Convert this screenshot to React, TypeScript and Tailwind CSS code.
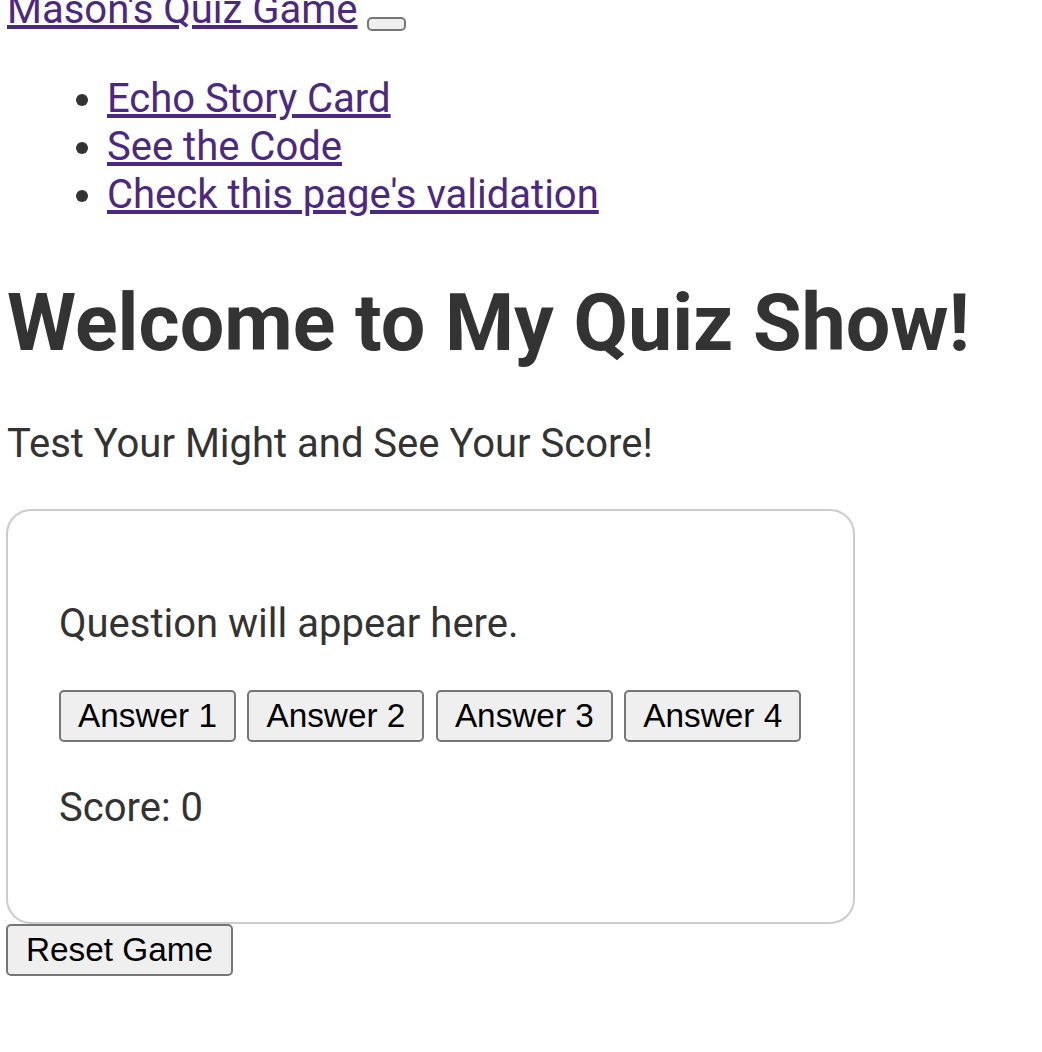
export default function App() {
	const answers = ["Answer 1", "Answer 2", "Answer 3", "Answer 4"];
	const btn =
		"h-[52px] shrink-0 whitespace-nowrap bg-[#efefef] border-2 border-[#767676] rounded-[5px] text-black text-[33.33px] leading-[38px] font-['Liberation_Sans',Arial,sans-serif]";

	return (
		<div className="min-h-[1052px] bg-white overflow-hidden font-['Roboto',sans-serif] text-[#333333] text-[40px] leading-[48px] pl-[6px]">
			{/* header */}
			<div className="flex items-start -mt-[14px] pl-px">
				<a href="#" className="text-[#4b2882] underline">
					Mason's Quiz Game
				</a>
				<button className="ml-[9px] mt-[31px] w-[39px] h-[14px] bg-[#efefef] border-2 border-[#767676] rounded-[5px]"></button>
			</div>

			<ul className="list-disc pl-[101px] mt-[41px]">
				<li><a href="#" className="text-[#4b2882] underline">Echo Story Card</a></li>
				<li><a href="#" className="text-[#4b2882] underline">See the Code</a></li>
				<li><a href="#" className="text-[#4b2882] underline">Check this page's validation</a></li>
			</ul>

			<h1 className="mt-[56px] pl-px text-[79px] leading-[96px] font-bold">Welcome to My Quiz Show!</h1>

			<p className="mt-[49px] pl-px">Test Your Might and See Your Score!</p>

			<div className="mt-[41px] w-[849px] border-2 border-[#cccccc] rounded-[25px] px-[51px] pt-[50px] pb-[50px]">
				<p className="mt-[39px]">Question will appear here.</p>
				<div className="mt-[42px] flex gap-[11.5px]">
					{answers.map((a) => (
						<button key={a} className={`${btn} px-[17px]`}>{a}</button>
					))}
				</div>
				<p className="mt-[42px] mb-[40px]">Score: 0</p>
			</div>

			<button className={`${btn} px-[18px] h-[51px]`}>Reset Game</button>
		</div>
	);
}
